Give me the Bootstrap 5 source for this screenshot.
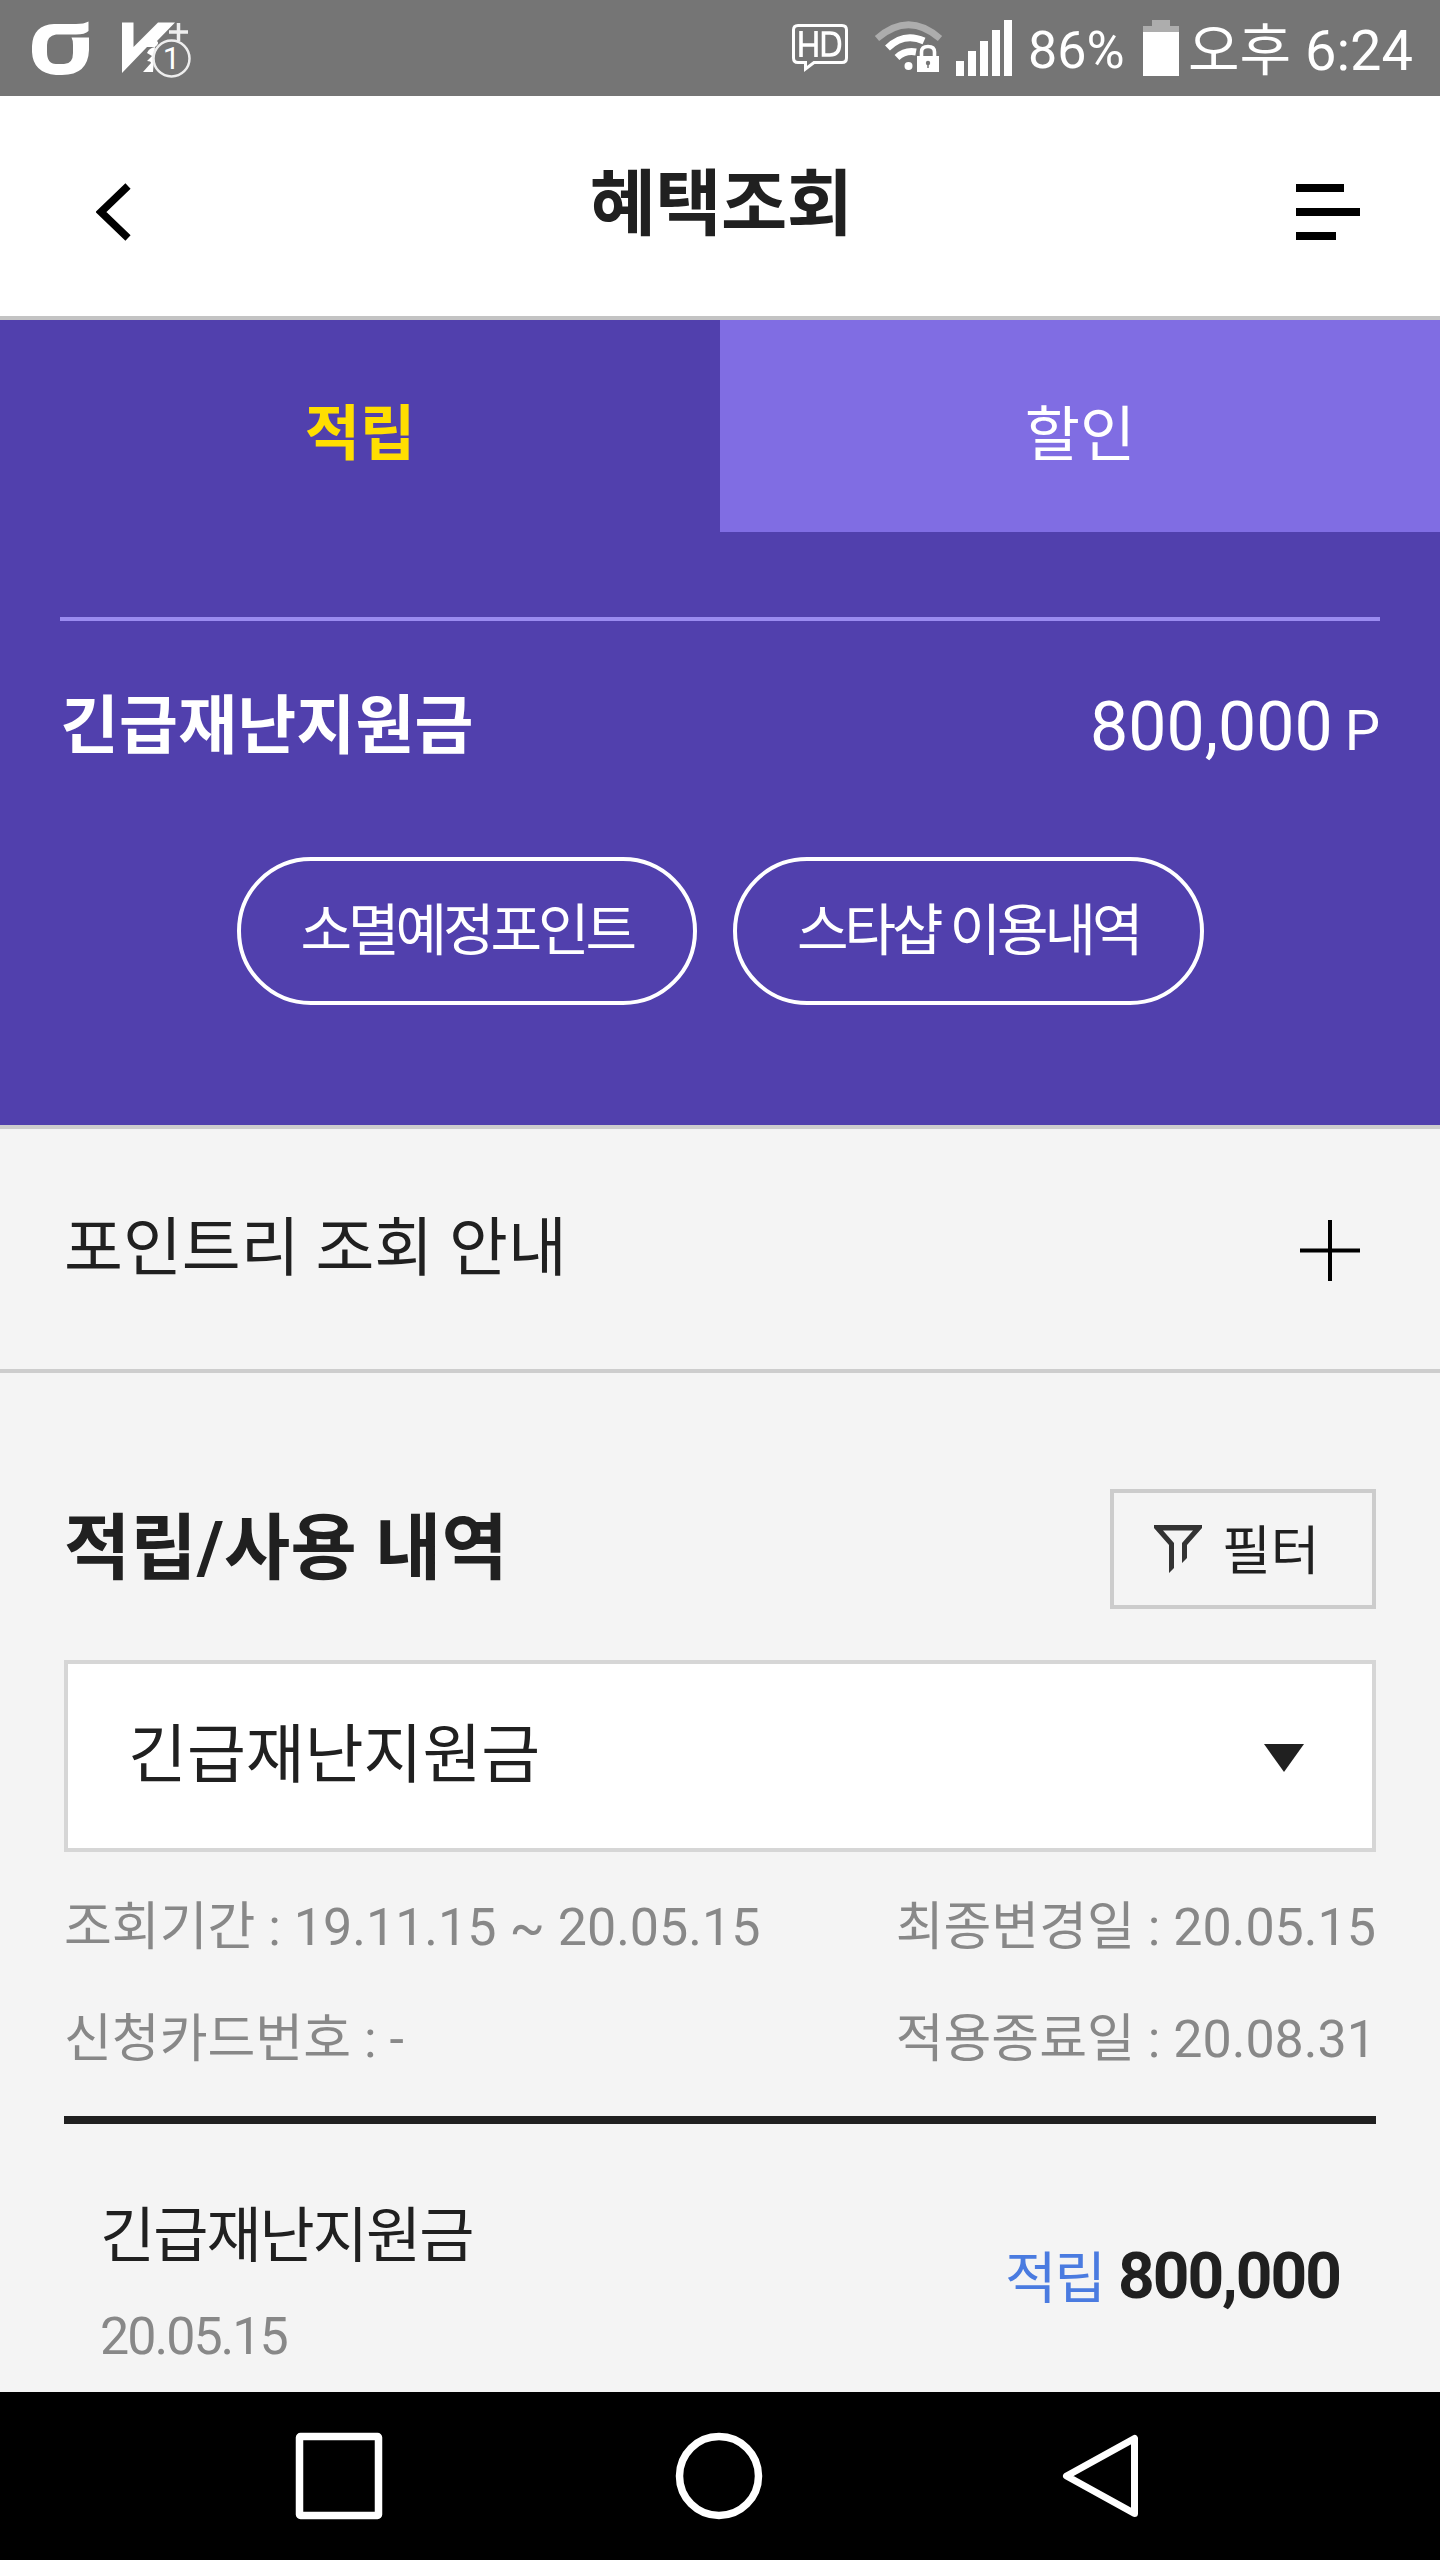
<!DOCTYPE html>
<html lang="ko">
<head>
<meta charset="utf-8">
<meta name="viewport" content="width=device-width, initial-scale=1">
<title>혜택조회</title>
<link href="https://cdn.jsdelivr.net/npm/bootstrap@5.3.0/dist/css/bootstrap.min.css" rel="stylesheet">
<style>
body{font-family:Roboto,"Noto Sans CJK KR",sans-serif;background:#f4f4f4;color:#202020;width:1440px;height:2560px;overflow:hidden;line-height:1;letter-spacing:0}
svg{display:block;flex:none}
.page-body{height:2392px;overflow:hidden}
.status-bar{height:96px;background:#757575;color:#fff;padding:0 28px 0 32px}
.st-app{margin-left:32px}
.st-text{padding-top:6px;white-space:nowrap}
.st-batt{font-size:52px;margin-left:16px;width:115px}
.st-time{font-size:56px;margin-left:9px;width:224px}
.app-head{height:224px;background:#fff;border-bottom:4px solid #c3c3c3;padding:0 80px 0 96px}
.app-head svg{margin-top:12px}
.app-title{font-size:72px;font-weight:700;letter-spacing:-.6px;line-height:1;padding:0 14px 3px 0}
.tab-row .nav-link{height:212px;border-radius:0;font-size:60px;color:#fff;background:#806de3;padding:19px 0 0}
.tab-row .nav-link.active{background:#5140ad;color:#ffde00;font-weight:700;padding-top:17px}
.hero{background:#5140ad;color:#fff;height:597px;border-bottom:4px solid #cdcdcd;padding:85px 60px 0}
.hero-line{height:4px;background:#9a8bf0}
.hero-sum{height:236px;padding-bottom:24px}
.hero-name{font-size:64px;font-weight:700;letter-spacing:.2px}
.hero-pt{font-size:68px}
.hero-pt span{font-size:56px;margin-left:12px}
.pill-row{gap:36px;padding-left:1px}
.pill-btn{height:148px;border:4px solid #fff;border-radius:74px;font-size:56px;letter-spacing:-4px;color:#fff;padding:0 60px;line-height:1}
.pill-btn:first-child{padding:0 60px 0 59px}
.guide{height:244px;border-bottom:4px solid #cdcdcd;padding:0 80px 0 64px;font-size:64px}
.guide svg{margin-top:3px}
.main-area{padding:116px 64px 0}
.sec-title{font-size:72px;font-weight:700;line-height:1;letter-spacing:.25px}
.filter-btn{width:266px;height:120px;border:4px solid #ccc;border-radius:0;font-size:53px;color:#202020;padding:0 0 0 40px;line-height:1}
.filter-label{margin-left:20px;padding-top:6px}
.pick{height:192px;margin-top:51px;border:4px solid #d6d6d6;background:#fff;border-radius:0;font-size:64px;color:#202020;padding:0 68px 0 60px}
.pick svg{margin-top:4px}
.info{font-size:52px;line-height:112px;color:#888;margin-top:20px}
.rule{height:8px;background:#202020;margin-top:20px}
.entry{padding:63px 36px 0}
.entry-name{font-size:60px;letter-spacing:-2px;line-height:100px}
.entry-date{font-size:52px;letter-spacing:-2px;line-height:100px;color:#888}
.entry-amt{font-size:64px;font-weight:700;letter-spacing:-2px;padding-top:58px}
.entry-amt span{font-size:56px;font-weight:400;color:#4a7be0}
.sys-nav{height:168px;background:#000;padding:0 302px 0 295px}
.nav-home{margin-right:7px}
</style>
</head>
<body>
<div class="page-body">
<div class="status-bar d-flex align-items-center">
  <svg width="57" height="96" viewBox="32 0 57 96"><path d="M54 24H76Q84 24 88.500 21.500V31Q85 34.500 76 34.500H56Q47 36 47 45V52Q47 64 56 64H64Q73 64 73 53V45Q73 40 71.500 37.500H89V50Q88 75 62 75H56Q33 73 32 52V46Q33 25 54 24Z" fill="#fff"/></svg>
  <svg class="st-app" width="72" height="96" viewBox="121 0 72 96"><path d="M122 22.500H133.500V47L158 22.500H175L157 41Q160 43 155 47L147 47L122 73Z" fill="#fff"/><path d="M147 53Q149 48 155 47L153 72H143L151 63Q151 61 147 61L152 56Z" fill="#fff"/><path d="M178.500 23V41M169 32H188" stroke="#eee" stroke-width="3.500"/><circle cx="171.500" cy="58.500" r="18" fill="#757575" stroke="#eee" stroke-width="2.500"/><text x="171.500" y="69" text-anchor="middle" font-size="31" fill="#fff">1</text></svg>
  <svg class="ms-auto" width="222" height="96" viewBox="790 0 222 96" fill="none">
    <path d="M798 25.500H842Q846.500 25.500 846.500 30V58Q846.500 62.500 842 62.500H814L805.500 69V62.500H798Q793.500 62.500 793.500 58V30Q793.500 25.500 798 25.500Z" stroke="#fff" stroke-width="3"/>
    <path d="M801 31V57M816 31V57M801 45H816M823.500 33H830Q839.500 33 839.500 44Q839.500 55 830 55H823.500Z" stroke="#fff" stroke-width="3.600"/>
    <path d="M877 38.500Q908.500 11 940 38.500" stroke="#adadad" stroke-width="6.500"/>
    <path d="M887.500 48Q904 32 924 41" stroke="#fff" stroke-width="7"/><path d="M897 57.500Q905 50 916 52" stroke="#fff" stroke-width="7"/><circle cx="908.500" cy="66" r="4" fill="#fff"/>
    <path d="M921.500 58V52Q921.500 46.500 928 46.500T934.500 52V58" stroke="#fff" stroke-width="3.600"/><path d="M917 56H939V72H917Z" fill="#fff"/><circle cx="928" cy="63" r="2.200" fill="#757575"/><path d="M928 63V68" stroke="#757575" stroke-width="1.500"/>
    <path d="M956 61H964V76H956ZM968 51H976V76H968ZM980 41H988V76H980ZM992 30H1000V76H992ZM1004 20H1012V76H1004Z" fill="#fff"/>
  </svg>
  <div class="st-text st-batt">86%</div>
  <svg width="36" height="96" viewBox="0 0 36 96"><path d="M9 20H27V26H36V32H0V26H9Z" fill="#adadad"/><path d="M0 32H36V76H0Z" fill="#fff"/></svg>
  <div class="st-text st-time">오후 6:24</div>
</div>

<header class="app-head d-flex align-items-center justify-content-between">
  <svg width="66" height="60" viewBox="96 182 66 60"><path d="M128 186L101 212L128 238" fill="none" stroke="#000" stroke-width="7.500"/></svg>
  <h1 class="app-title m-0">혜택조회</h1>
  <svg width="66" height="60" viewBox="1294 182 66 60"><path d="M1296 184H1344V192H1296ZM1296 208H1360V216H1296ZM1296 232H1336V240H1296Z"/></svg>
</header>

<nav class="nav nav-fill tab-row row g-0">
  <a class="nav-link active col-6 d-flex align-items-center justify-content-center">적립</a>
  <a class="nav-link col-6 d-flex align-items-center justify-content-center">할인</a>
</nav>

<section class="hero">
  <div class="hero-line"></div>
  <div class="hero-sum d-flex align-items-center justify-content-between">
    <div class="hero-name">긴급재난지원금</div>
    <div class="hero-pt">800,000<span>P</span></div>
  </div>
  <div class="d-flex justify-content-center pill-row">
    <button class="btn pill-btn">소멸예정포인트</button>
    <button class="btn pill-btn">스타샵 이용내역</button>
  </div>
</section>

<section class="guide d-flex align-items-center justify-content-between">
  <div>포인트리 조회 안내</div>
  <svg width="60" height="61" viewBox="0 0 60 61"><path d="M30 0V61M0 30.500H60" stroke="#000" stroke-width="4"/></svg>
</section>

<main class="main-area">
  <div class="d-flex align-items-center justify-content-between">
    <h2 class="sec-title m-0">적립/사용 내역</h2>
    <button class="btn filter-btn d-flex align-items-center">
      <svg width="48" height="48" viewBox="0 0 48 48"><path d="M0 0H48V3L33 20V33L28 38V18L39 5.500H9L20 18V43L15 48V20L0 3Z" fill="#333"/></svg>
      <span class="filter-label">필터</span>
    </button>
  </div>
  <div class="pick d-flex align-items-center justify-content-between">
    <span>긴급재난지원금</span>
    <svg width="40" height="28" viewBox="0 0 40 28"><path d="M0 0H40L20 28Z" fill="#202020"/></svg>
  </div>
  <div class="info">
    <div class="d-flex justify-content-between"><span>조회기간 : 19.11.15 ~ 20.05.15</span><span>최종변경일 : 20.05.15</span></div>
    <div class="d-flex justify-content-between"><span>신청카드번호 : -</span><span>적용종료일 : 20.08.31</span></div>
  </div>
  <div class="rule"></div>
  <div class="entry d-flex justify-content-between align-items-start">
    <div><div class="entry-name">긴급재난지원금</div><div class="entry-date">20.05.15</div></div>
    <div class="entry-amt"><span>적립</span> 800,000</div>
  </div>
</main>
</div>

<footer class="sys-nav d-flex align-items-center justify-content-between">
  <svg width="88" height="88" viewBox="0 0 88 88"><rect x="4.500" y="4.500" width="79" height="79" rx="1" fill="none" stroke="#fff" stroke-width="7.500"/></svg>
  <svg class="nav-home" width="88" height="88" viewBox="0 0 88 88"><circle cx="44" cy="44" r="39.500" fill="none" stroke="#fff" stroke-width="7.500"/></svg>
  <svg width="76" height="88" viewBox="0 0 76 88"><path d="M72.500 6.500V81.500L4.500 44Z" fill="none" stroke="#fff" stroke-width="7" stroke-linejoin="round"/></svg>
</footer>
<script src="https://cdn.jsdelivr.net/npm/bootstrap@5.3.0/dist/js/bootstrap.bundle.min.js"></script>
</body>
</html>
